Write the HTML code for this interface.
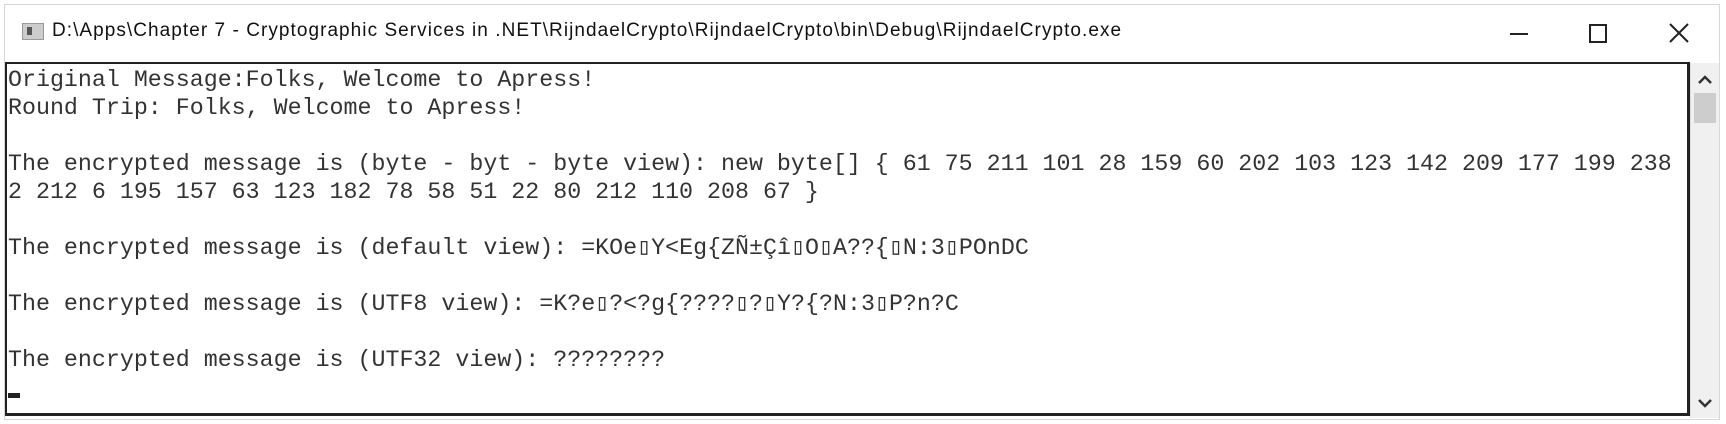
<!DOCTYPE html>
<html><head><style>
body{margin:0;width:1726px;height:424px;background:#fff;position:relative;overflow:hidden;font-family:"Liberation Sans",sans-serif}
.win{position:absolute;left:4px;top:4px;width:1716px;height:416px;border:1px solid #d8d8d8;box-sizing:border-box;background:#fff}
.title{position:absolute;left:52px;top:20px;font-size:19px;letter-spacing:1.05px;color:#111;white-space:nowrap}
.icon{position:absolute;left:22px;top:23px;width:20px;height:15px;background:#ccc;border:1px solid #999}
.icon:before{content:"";position:absolute;left:4px;top:3px;width:5px;height:8px;background:#555}
.con{position:absolute;left:5px;top:62px;width:1685px;height:354px;border:2px solid #222;box-sizing:border-box;border-right-width:3px;border-bottom-width:3px}
pre{margin:0;position:absolute;left:8px;top:66px;font-family:"Liberation Mono",monospace;font-size:23.3px;line-height:28px;color:#333}
.sb{position:absolute;left:1690px;top:63px;width:28px;height:355px;background:#f0f0f0;border-left:1px solid #ddd}
.thumb{position:absolute;left:3px;top:30px;width:22px;height:30px;background:#cdcdcd}
</style></head><body>
<div class="win"></div>
<div class="icon"></div>
<div class="title">D:\Apps\Chapter 7 - Cryptographic Services in .NET\RijndaelCrypto\RijndaelCrypto\bin\Debug\RijndaelCrypto.exe</div>
<div style="position:absolute;left:1510px;top:33px;width:18px;height:2px;background:#222"></div>
<div style="position:absolute;left:1589px;top:24px;width:14px;height:15px;border:2px solid #222;box-sizing:content-box"></div>
<svg style="position:absolute;left:1668px;top:22px" width="22" height="22"><path d="M2 2L20 20M20 2L2 20" stroke="#222" stroke-width="2"/></svg>
<div class="con"></div>
<pre>Original Message:Folks, Welcome to Apress!
Round Trip: Folks, Welcome to Apress!

The encrypted message is (byte - byt - byte view): new byte[] { 61 75 211 101 28 159 60 202 103 123 142 209 177 199 238
2 212 6 195 157 63 123 182 78 58 51 22 80 212 110 208 67 }

The encrypted message is (default view): =KOe&#9647;Y&lt;Eg{ZÑ±Çî&#9647;O&#9647;A??{&#9647;N:3&#9647;POnDC

The encrypted message is (UTF8 view): =K?e&#9647;?&lt;?g{????&#9647;?&#9647;Y?{?N:3&#9647;P?n?C

The encrypted message is (UTF32 view): ????????
</pre>
<div style="position:absolute;left:8px;top:393px;width:12px;height:5px;background:#222"></div>
<div class="sb"><div class="thumb"></div>
<svg style="position:absolute;left:7px;top:12px" width="14" height="10"><path d="M1 8L7 2L13 8" stroke="#333" stroke-width="2.5" fill="none"/></svg>
<svg style="position:absolute;left:7px;top:335px" width="14" height="10"><path d="M1 2L7 8L13 2" stroke="#333" stroke-width="2.5" fill="none"/></svg>
</div>
</body></html>
